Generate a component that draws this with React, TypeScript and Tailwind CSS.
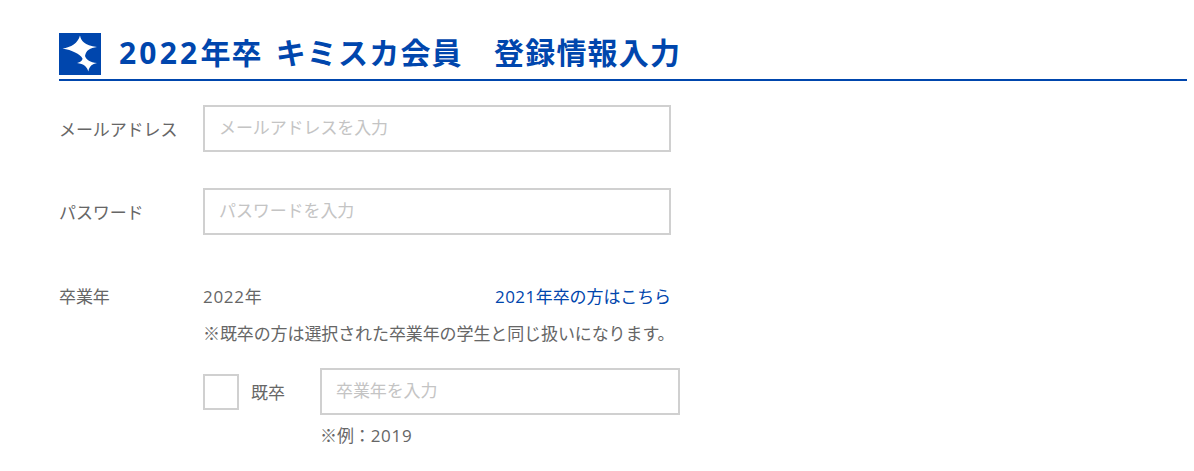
const font = { fontFamily: '"Open Sans", "Noto Sans CJK JP", sans-serif' };

function Logo() {
  return (
    <svg viewBox="0 0 42 42" className="size-[42px] shrink-0">
      <rect width="42" height="42" fill="#0046ad" />
      <path
        d="M21 2.5 C22 8 25 12 38 14 C31 15 27 17 26 23 C27.5 27 31 29.5 38 30 C33 31 30.5 33 29.3 38.5 C28 33.5 25 31 18 30 C21 29.5 23.5 27.5 23.5 25.5 C21 21 13 17 3.5 15.5 C12 14.5 19 10 21 2.5 Z"
        fill="#fff"
      />
    </svg>
  );
}

function TextInput({ placeholder, className }: { placeholder: string; className: string }) {
  return (
    <input
      type="text"
      placeholder={placeholder}
      className={`border-2 border-[#d0d0d0] bg-white px-[14px] pb-[3px] text-[17px] tracking-[-0.1px] outline-none placeholder:text-[#c4c4c4] ${className}`}
    />
  );
}

export default function App() {
  return (
    <div className="min-h-[471px] bg-white pl-[59px] pr-[7px] pt-[33px] text-[17px] tracking-[-0.1px] text-[#666]" style={font}>
      {/* Heading */}
      <div className="flex h-[48px] items-start gap-[18px] border-b-2 border-[#0046ad]">
        <Logo />
        <h1 className="-mt-px text-[30px] leading-[42px] font-bold tracking-[1.2px] whitespace-pre text-[#0046ad]">
          <span className="tracking-[3.2px]">2022</span>年卒<span className="tracking-[5px]"> </span>キミスカ会員　登録情報入力
        </h1>
      </div>

      {/* Email */}
      <div className="mt-[24px] flex h-[47px] items-center">
        <label className="w-[144px] pt-[2px] whitespace-nowrap">メールアドレス</label>
        <TextInput placeholder="メールアドレスを入力" className="h-[47px] w-[468px]" />
      </div>

      {/* Password */}
      <div className="mt-[36px] flex h-[47px] items-center">
        <label className="w-[144px] pt-[2px]">パスワード</label>
        <TextInput placeholder="パスワードを入力" className="h-[47px] w-[468px]" />
      </div>

      {/* Graduation year */}
      <div className="mt-[48px] flex">
        <label className="w-[144px] leading-[28px]">卒業年</label>
        <div className="w-[477px]">
          <div className="flex w-[468px] justify-between leading-[28px]">
            <span><span className="tracking-[0.7px]">2022</span>年</span>
            <a className="text-[#0046ad]"><span className="tracking-[0.5px]">2021</span>年卒の方はこちら</a>
          </div>
          <p className="mt-[9px] leading-[28px] whitespace-nowrap">
            ※既卒の方は選択された卒業年の学生と同じ扱いになります。
          </p>
          <div className="mt-[20px] flex items-center">
            <span className="size-[36px] border-2 border-[#d0d0d0]" />
            <span className="ml-[12px] w-[69px] pt-[2px]">既卒</span>
            <TextInput placeholder="卒業年を入力" className="h-[47px] w-[360px]" />
          </div>
          <p className="mt-[7px] ml-[117px] leading-[28px]">※例：<span className="tracking-[0.7px]">2019</span></p>
        </div>
      </div>
    </div>
  );
}
